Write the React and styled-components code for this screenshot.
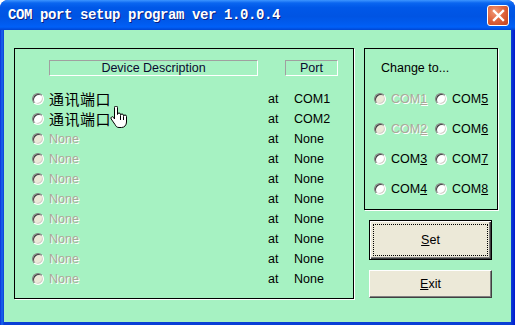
import React from "react";
import styled, { createGlobalStyle } from "styled-components";

const GlobalStyle = createGlobalStyle`
  html, body {
    margin: 0;
    padding: 0;
    background: #ffffff;
  }
  * {
    box-sizing: border-box;
  }
`;

const devices = [
  { name: "通讯端口", port: "COM1", enabled: true },
  { name: "通讯端口", port: "COM2", enabled: true },
  ...Array.from({ length: 8 }, () => ({ name: "None", port: "None", enabled: false })),
];

const targets = [
  [{ n: 1, enabled: false }, { n: 5, enabled: true }],
  [{ n: 2, enabled: false }, { n: 6, enabled: true }],
  [{ n: 3, enabled: true }, { n: 7, enabled: true }],
  [{ n: 4, enabled: true }, { n: 8, enabled: true }],
];

const App = () => {
  return (
    <>
      <GlobalStyle />
      <Window>
        <TitleBar>
          <Title>COM port setup program ver 1.0.0.4</Title>
          <CloseButton>
            <svg width="13" height="13" viewBox="0 0 13 13">
              <path d="M2 2 L11 11 M11 2 L2 11" stroke="#fff" strokeWidth="2.4" strokeLinecap="square" />
            </svg>
          </CloseButton>
        </TitleBar>

        <Client>
          <DeviceFrame>
            <HeaderRow>
              <ColumnHeader $width={209}>Device Description</ColumnHeader>
              <ColumnHeader $width={53} style={{ marginLeft: 27 }}>
                Port
              </ColumnHeader>
            </HeaderRow>
            <DeviceList>
              {devices.map((d, i) => (
                <DeviceRow key={i}>
                  <Radio $disabled={!d.enabled} />
                  {d.enabled ? <CjkLabel>{d.name}</CjkLabel> : <DisabledText>{d.name}</DisabledText>}
                  <Text>at</Text>
                  <Text>{d.port}</Text>
                </DeviceRow>
              ))}
            </DeviceList>
          </DeviceFrame>

          <SideColumn>
            <ChangeFrame>
              <Text>Change to...</Text>
              <TargetGrid>
                {targets.flat().map((t) => (
                  <TargetOption key={t.n}>
                    <Radio $disabled={!t.enabled} />
                    {t.enabled ? (
                      <Text>
                        COM<u>{t.n}</u>
                      </Text>
                    ) : (
                      <DisabledText>
                        COM<u>{t.n}</u>
                      </DisabledText>
                    )}
                  </TargetOption>
                ))}
              </TargetGrid>
            </ChangeFrame>

            <Button $default $height={40}>
              <FocusRing>
                <u>S</u>et
              </FocusRing>
            </Button>
            <Button $height={28}>
              <u>E</u>xit
            </Button>
          </SideColumn>
        </Client>

        <Cursor width="17" height="23" viewBox="0 0 17 23">
          <path
            d="M4.5 1.5 a1.5 1.5 0 0 1 3 0 V8.5 a1.5 1.5 0 0 1 3 0 V9.5 a1.5 1.5 0 0 1 3 0 V10.5 a1.5 1.5 0 0 1 3 0 V16 c0 3 -2 5.5 -5 5.5 H9 c-2 0 -3 -1 -4 -3 L1.2 13 a1.4 1.4 0 0 1 2.4 -1.6 L4.5 13 Z"
            fill="#fff"
            stroke="#000"
            strokeWidth="1"
          />
          <path d="M10.5 10 V14 M13.5 11 V14" stroke="#000" strokeWidth="1" />
        </Cursor>
      </Window>
    </>
  );
};

export default App;

const Window = styled.div`
  position: relative;
  width: 515px;
  height: 325px;
  display: flex;
  flex-direction: column;
  background: linear-gradient(to right, #0831d9 0, #166aee 2px, #0a3fd6 4px, #0a3fd6 511px, #0019cf 515px);
  border-radius: 8px 8px 0 0;
  overflow: hidden;
`;

const TitleBar = styled.div`
  height: 30px;
  flex: none;
  display: flex;
  align-items: center;
  justify-content: space-between;
  padding: 0 6px 0 8px;
  background: linear-gradient(
    to bottom,
    #3d95ff 0%,
    #0a66f0 10%,
    #0058e8 25%,
    #0054e3 55%,
    #005cf0 80%,
    #0060f8 90%,
    #0046d2 100%
  );
`;

const Title = styled.span`
  font-family: "Liberation Mono", "DejaVu Sans Mono", monospace;
  font-weight: bold;
  font-size: 14px;
  letter-spacing: -0.4px;
  color: #ffffff;
  text-shadow: 1px 1px 0 #0a1f80;
  white-space: pre;
`;

const CloseButton = styled.div`
  width: 22px;
  height: 21px;
  display: flex;
  align-items: center;
  justify-content: center;
  border: 1px solid #ffffff;
  border-radius: 3px;
  background: radial-gradient(circle at 35% 30%, #f19a78 0%, #e0663f 45%, #c4411a 100%);
`;

const Client = styled.div`
  flex: 1;
  margin: 0 4px 3px 4px;
  background: #a6f2c2;
  display: flex;
  align-items: flex-start;
  gap: 10px;
  padding: 18px 0 0 10px;
  font-family: "Liberation Sans", Arial, sans-serif;
  font-size: 12.5px;
  color: #000;
`;

const Frame = styled.div`
  border: 1px solid #000;
  box-shadow: 1px 1px 0 #ffffff;
`;

const DeviceFrame = styled(Frame)`
  width: 340px;
  height: 251px;
  padding: 11px 0 0 34px;
`;

const HeaderRow = styled.div`
  display: flex;
`;

const ColumnHeader = styled.div`
  width: ${(p) => p.$width}px;
  height: 16px;
  border: 1px solid;
  border-color: #a0a0a0 #ffffff #ffffff #a0a0a0;
  text-align: center;
  line-height: 14px;
  color: #0a0a30;
`;

const DeviceList = styled.div`
  margin: 13px 0 0 -17px;
  display: flex;
  flex-direction: column;
`;

const DeviceRow = styled.div`
  height: 20px;
  display: grid;
  grid-template-columns: 12px 214px 21px auto;
  column-gap: 5px;
  align-items: center;
`;

const Radio = styled.span`
  display: block;
  width: 12px;
  height: 12px;
  border-radius: 50%;
  border: 1px solid;
  border-color: #808080 #ffffff #ffffff #808080;
  background: ${(p) => (p.$disabled ? "#ece9d8" : "#ffffff")};
  box-shadow: inset 1px 1px 0 #404040, inset -1px -1px 0 #d4d0c8;
`;

const Text = styled.span`
  line-height: 15px;
  white-space: nowrap;
`;

const DisabledText = styled(Text)`
  color: #aca899;
  text-shadow: 1px 1px 0 #ffffff;
`;

const CjkLabel = styled.span`
  font-family: "Noto Sans CJK SC", "Noto Sans", sans-serif;
  font-size: 15px;
  line-height: 18px;
  letter-spacing: 0.5px;
`;

const SideColumn = styled.div`
  display: flex;
  flex-direction: column;
  align-items: flex-start;
`;

const ChangeFrame = styled(Frame)`
  width: 134px;
  height: 162px;
  padding: 12px 0 0 16px;
`;

const TargetGrid = styled.div`
  margin: 8px 0 0 -7px;
  display: grid;
  grid-template-columns: 61px 61px;
  grid-auto-rows: 30px;
`;

const TargetOption = styled.div`
  display: flex;
  align-items: center;
  gap: 5px;
`;

const Button = styled.div`
  width: 123px;
  height: ${(p) => p.$height}px;
  margin: ${(p) => (p.$default ? "10px" : "10px")} 0 0 5px;
  background: #ece9d8;
  display: flex;
  align-items: center;
  justify-content: center;
  border: 1px solid;
  border-color: ${(p) => (p.$default ? "#000" : "#fff #404040 #404040 #fff")};
  box-shadow: ${(p) =>
    p.$default
      ? "inset 1px 1px 0 #fff, inset -1px -1px 0 #404040, inset -2px -2px 0 #808080"
      : "inset -1px -1px 0 #808080"};
  padding: 3px;
`;

const FocusRing = styled.div`
  width: 100%;
  height: 100%;
  border: 1px dotted #000;
  display: flex;
  align-items: center;
  justify-content: center;
`;

const Cursor = styled.svg`
  position: absolute;
  left: 110px;
  top: 106px;
`;
